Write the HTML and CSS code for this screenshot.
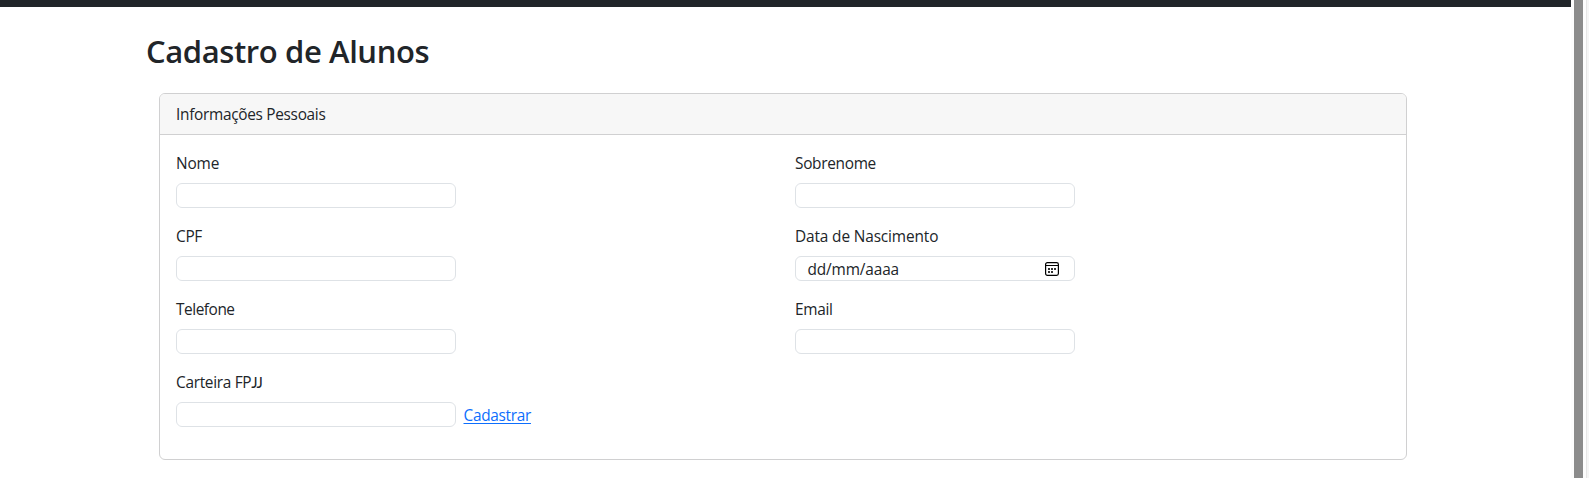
FILE: index.html
```html
<!DOCTYPE html>
<html lang="pt-BR">
<head>
<meta charset="utf-8">
<title>Cadastro de Alunos</title>
<link rel="stylesheet" href="styles.css">
</head>
<body>
<div class="page">
  <div class="navbar"></div>
  <main class="content">
    <h1 class="title"><span>Cadastro de Alunos</span></h1>
    <section class="card">
      <div class="card-header"><span>Informações Pessoais</span></div>
      <div class="card-body">
        <div class="field"><label><span class="wide">Nome</span></label><div class="control"></div></div>
        <div class="field"><label><span>Sobrenome</span></label><div class="control"></div></div>
        <div class="field"><label><span>CPF</span></label><div class="control"></div></div>
        <div class="field"><label><span class="wide">Data de Nascimento</span></label>
          <div class="control date"><span class="wide">dd/mm/aaaa</span>
            <svg class="calendar" width="14" height="14" viewBox="0 0 14 14">
              <rect x=".6" y=".6" width="12.8" height="12.8" rx="1.8" fill="none" stroke="#000" stroke-width="1.2"/>
              <path d="M1 3.5H13" stroke="#000" stroke-width="1"/>
              <path d="M3 6h2v2H3zM6 6h2v2H6zM9 6h2v2H9zM3 9h2v2H3zM6 9h2v2H6z" fill="#333"/>
            </svg>
          </div>
        </div>
        <div class="field"><label><span class="tight">Telefone</span></label><div class="control"></div></div>
        <div class="field"><label><span>Email</span></label><div class="control"></div></div>
        <div class="field"><label><span>Carteira FP<span class="short-j">JJ</span></span></label>
          <div class="inline"><div class="control"></div><a href="#">Cadastrar</a></div>
        </div>
      </div>
    </section>
  </main>
</div>
<div class="scrollbar"><div class="thumb"></div></div>
<div class="window-edge"></div>
</body>
</html>
```
FILE: styles.css
```css
* { box-sizing: border-box; }
body {
  margin: 0;
  height: 478px;
  display: flex;
  overflow: hidden;
  background: #fff;
  color: #212529;
  font: 15.4px/24px "Open Sans", "Noto Sans", sans-serif;
}
.page { flex: none; width: 1571px; }
.navbar { height: 7px; background: #212529; }
.content { width: 1261px; margin-left: 146px; padding-top: 24px; }
.title {
  margin: 0 0 24px;
  height: 38px;
  font-size: 31px;
  line-height: 40px;
  font-weight: 600;
  white-space: nowrap;
}
.title span { letter-spacing: -0.4px; }
.card {
  margin-left: 13px;
  height: 367px;
  border: 1px solid #d0d0d1;
  border-radius: 6px;
  overflow: hidden;
}
.card-header {
  height: 41px;
  padding: 9px 16px 7px;
  background: #f7f7f7;
  border-bottom: 1px solid #d0d0d1;
}
.card-body {
  padding: 16px;
  display: grid;
  grid-template-columns: 619px 1fr;
  row-gap: 16px;
}
label { display: block; height: 24px; margin-bottom: 8px; line-height: 26px; }
.control {
  flex: none;
  width: 280px;
  height: 25px;
  border: 1px solid #dee2e6;
  border-radius: 6px;
}
.date {
  display: flex;
  align-items: center;
  justify-content: space-between;
  padding: 2px 15px 0 11.5px;
}
.calendar { margin-bottom: 1px; }
.inline { display: flex; gap: 7.5px; height: 25px; }
.inline a { color: #0d6efd; line-height: 28px; text-underline-offset: 2px; }
.card span, .card a { letter-spacing: -0.3px; white-space: nowrap; }
.card .wide { letter-spacing: -0.13px; }
.card .tight { letter-spacing: -0.45px; }
.card .short-j { font-family: Lato, sans-serif; font-size: 15px; line-height: 0; letter-spacing: -1px; }
.scrollbar {
  flex: none;
  width: 15px;
  padding-left: 3px;
  background: #fcfcfc;
}
.thumb { width: 9px; height: 478px; background: #8b8b8b; }
.window-edge { flex: none; width: 3px; background: #f5f5f5; border-left: 1px solid #e5e5e5; }
```
